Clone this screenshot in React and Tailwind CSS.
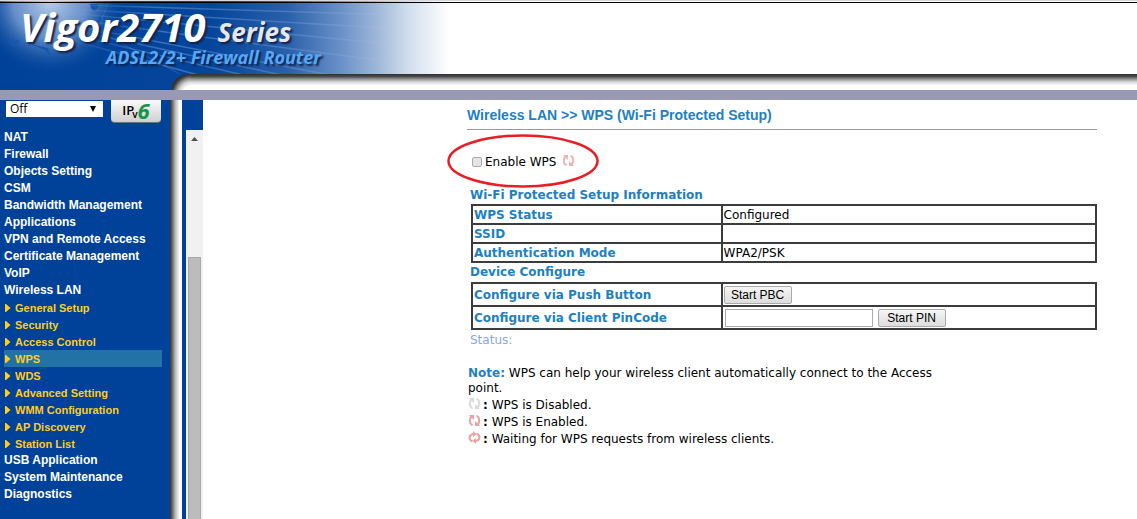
import React from "react";

const sections = ["NAT", "Firewall", "Objects Setting", "CSM", "Bandwidth Management", "Applications", "VPN and Remote Access", "Certificate Management", "VoIP", "Wireless LAN"];
const wireless = ["General Setup", "Security", "Access Control", "WPS", "WDS", "Advanced Setting", "WMM Configuration", "AP Discovery", "Station List"];
const system = ["USB Application", "System Maintenance", "Diagnostics"];

function WpsIcon({ color, waiting = false }) {
  return (
    <svg className="block h-[13px] w-[13px] shrink-0" viewBox="0 0 13 13" fill="none" stroke={color} strokeWidth="2" aria-hidden="true">
      {waiting ? (
        <>
          <path d="M4.500 10.500C.2 8.500.6 3.800 5.500 3" />
          <path d="M8.500 2.500C12.800 4.500 12.400 9.200 7.500 10" />
          <path d="M5 0 8.500 3 5 6ZM8 7 4.500 10 8 13Z" fill={color} stroke="none" />
        </>
      ) : (
        <>
          <path d="M4.500 11.500C1 9.500 1 5 3.500 2.500" />
          <path d="M8.500 1.500C12 3.500 12 8 9.500 10.500" />
          <path d="M1 1H6V6ZM12 12H7V7Z" fill={color} stroke="none" />
        </>
      )}
    </svg>
  );
}

function Banner() {
  return (
    <header className="relative h-[90px] overflow-hidden border-t border-[#d8d8de] bg-white">
      <svg className="absolute inset-0 h-full w-full" aria-hidden="true">
        <defs>
          <linearGradient id="sky" gradientUnits="userSpaceOnUse" x1="0" y1="0" x2="450" y2="0">
            <stop offset="0" stopColor="#00429a" />
            <stop offset=".47" stopColor="#05459b" />
            <stop offset=".64" stopColor="#2a60ab" />
            <stop offset=".76" stopColor="#6a92c8" />
            <stop offset=".84" stopColor="#a0b8da" />
            <stop offset=".91" stopColor="#d3dfee" />
            <stop offset="1" stopColor="#fff" />
          </linearGradient>
          <radialGradient id="globe" gradientUnits="userSpaceOnUse" cx="50" cy="0" r="75">
            <stop offset="0" stopColor="#b9cdeb" />
            <stop offset=".5" stopColor="#7fa2d5" stopOpacity=".8" />
            <stop offset="1" stopColor="#00429a" stopOpacity="0" />
          </radialGradient>
          <linearGradient id="rays" gradientUnits="userSpaceOnUse" x1="60" y1="0" x2="400" y2="0">
            <stop offset="0" stopColor="#8fb2e2" stopOpacity="0" />
            <stop offset=".3" stopColor="#8fb2e2" stopOpacity=".4" />
            <stop offset=".75" stopColor="#9dbbe4" stopOpacity=".25" />
            <stop offset="1" stopColor="#d5e0f1" stopOpacity="0" />
          </linearGradient>
          <linearGradient id="edge" x1="0" y1="0" x2="0" y2="1">
            <stop offset="0" stopColor="#303030" />
            <stop offset=".15" stopColor="#484848" />
            <stop offset=".3" stopColor="#8c8c8c" />
            <stop offset=".5" stopColor="#d8d8d8" />
            <stop offset=".7" stopColor="#fff" />
          </linearGradient>
          <radialGradient id="bend" gradientUnits="userSpaceOnUse" cx="191" cy="93" r="20">
            <stop offset=".4" stopColor="#fff" />
            <stop offset=".6" stopColor="#d8d8d8" />
            <stop offset=".78" stopColor="#8c8c8c" />
            <stop offset=".9" stopColor="#484848" />
            <stop offset="1" stopColor="#303030" />
          </radialGradient>
        </defs>
        <rect width="100%" height="90" fill="url(#sky)" />
        <rect width="150" height="90" fill="url(#globe)" />
        <path d="M90 3h9l-1 4-4 3-3-3zM100 14l4 8-7 7-2-6zM8 41l12-2-6 7zM30 43l18 4 3 8-6-6z" fill="#1558ad" />
        <path d="M108 1 98 30 180 73" stroke="#3f74bd" strokeOpacity=".5" fill="none" />
        <g stroke="url(#rays)" strokeWidth="1.500" fill="none">
          <path d="M80 4 400 14M70 8 400 28M70 12 400 44M60 17 400 62M60 22 340 76M60 26 300 78M60 31 260 78M60 36 220 80" />
        </g>
        <rect x="191" y="73" width="100%" height="16" fill="url(#edge)" />
        <path d="M171 90Q173 73 191 73V90Z" fill="url(#bend)" />
        <rect width="100%" y="1" height="1" fill="#000" />
      </svg>
      <div className="relative pl-5 pt-1.5 font-['Open_Sans',sans-serif] font-bold italic">
        <h1 className="flex h-10 items-baseline gap-3 leading-10 text-white [text-shadow:2px_2px_2px_#10234d]">
          <span className="text-[40px]">Vigor2710</span>
          <span className="text-[26px] text-gray-200">Series</span>
        </h1>
        <p className="pl-[86px] text-lg leading-5 text-[#55a8f5] [text-shadow:2px_2px_2px_#10234d]">ADSL2/2+ Firewall Router</p>
      </div>
    </header>
  );
}

function Sidebar() {
  return (
    <aside className="flex w-[203px] shrink-0">
      <div className="w-[170px] bg-[#00429a]">
        <div className="flex h-[29px] items-start gap-2 pl-1.5">
          <div className="relative mt-px h-4 w-[97px]">
            <select aria-label="Auto logout" className="block h-4 w-full appearance-none rounded-none bg-white pl-1 font-['Open_Sans',sans-serif] text-xs leading-4 text-black">
              <option>Off</option>
              <option>5 min</option>
            </select>
            <svg className="pointer-events-none absolute right-[7px] top-[5px] h-1.5 w-1.5" viewBox="0 0 6 6" aria-hidden="true"><path d="M0 0h6L3 6z" fill="#000" /></svg>
          </div>
          <button className="flex h-[23px] w-[50px] items-start justify-center rounded-b-sm border-b border-gray-500 bg-linear-to-b from-[#fafafa] to-[#d0d0d0] font-['Open_Sans',sans-serif] text-black" aria-label="IPv6">
            <span className="mt-0.5 text-[13px] font-semibold leading-4">IP</span>
            <span className="-ml-0.5 mt-1.5 text-[10px] font-semibold leading-4">v</span>
            <span className="text-[22px] font-bold italic leading-5 text-[#189548]">6</span>
          </button>
        </div>
        <nav className="font-['Liberation_Sans',sans-serif] font-bold">
          <ul className="pl-1 text-xs leading-[17px] text-white">
            {sections.map((name) => <li key={name}><a href="#">{name}</a></li>)}
          </ul>
          <ul className="ml-1 mr-2 text-[11px] text-[#ffcc1f]">
            {wireless.map((name) => (
              <li key={name} className={name === "WPS" ? "bg-[#2272a8]" : ""}>
                <a href="#" className="flex items-center gap-1 pl-px pt-px leading-4">
                  <svg className="h-2 w-1.5" viewBox="0 0 6 8" aria-hidden="true"><path d="M0 0h1L5.500 4 1 8H0z" fill="currentColor" /></svg>
                  {name}
                </a>
              </li>
            ))}
          </ul>
          <ul className="pl-1 text-xs leading-[17px] text-white">
            {system.map((name) => <li key={name}><a href="#">{name}</a></li>)}
          </ul>
        </nav>
      </div>
      <div className="w-3 bg-linear-to-r from-[#333] via-[#bbb] via-45% to-white to-80%" />
      <div className="w-1 bg-[#00429a]" />
      <div className="flex flex-1 flex-col">
        <div className="h-[30px] bg-[#00429a]" />
        <div className="flex flex-1 flex-col items-center bg-[#f1f1f1]">
          <svg className="mt-[7px] h-1 w-[7px]" viewBox="0 0 7 4" aria-hidden="true"><path d="M0 4 3.500 0 7 4z" fill="#505050" /></svg>
          <div className="mt-[116px] w-[13px] flex-1 border border-b-0 border-[#a8a8a8] bg-[#bcbcbc]" />
        </div>
      </div>
    </aside>
  );
}

const table = "ml-1 w-[calc(100%-4px)] table-fixed border-collapse border-2 border-[#3c3c3c] [&_td]:border-2 [&_td]:border-[#3c3c3c] [&_td]:pl-px [&_th]:border-2 [&_th]:border-[#3c3c3c] [&_th]:pl-px [&_th]:text-left [&_th]:text-[#1d80c3]";
const button = "h-[18px] w-[68px] rounded-xs border border-[#aaa] bg-linear-to-b from-[#f6f6f6] to-[#dddddd] font-['Liberation_Sans',sans-serif] text-xs leading-4 text-black";

export default function App() {
  return (
    <div className="flex min-h-screen flex-col bg-white font-['DejaVu_Sans',Verdana,sans-serif] text-xs text-black">
      <Banner />
      <div className="h-2.5 bg-[#9999b5]" />
      <div className="flex flex-1">
        <Sidebar />
        <main className="ml-[264px] mr-10 min-w-0 flex-1">
          <h2 className="border-b border-[#999] pb-[5px] pt-[7px] font-['Liberation_Sans',sans-serif] text-sm font-bold leading-[17px] text-[#1d80c3]">Wireless LAN &gt;&gt; WPS (Wi-Fi Protected Setup)</h2>
          <div className="relative mt-6 flex h-4 items-center pl-[5px]">
            <label className="flex items-center gap-[3px]">
              <input type="checkbox" className="h-2.5 w-2.5 appearance-none rounded-xs border border-[#aaa] bg-[#e4e4e4]" />
              Enable WPS
            </label>
            <span className="ml-1.5 self-start"><WpsIcon color="#efb3b3" /></span>
            <svg className="pointer-events-none absolute -left-5 -top-5 h-[54px] w-[152px]" viewBox="0 0 152 54" fill="none" aria-hidden="true">
              <ellipse cx="76" cy="27" rx="74.500" ry="25.500" stroke="#eb1c24" strokeWidth="2.500" />
            </svg>
          </div>
          <h3 className="mt-4 pl-[3px] font-bold leading-[18px] text-[#1d80c3]">Wi-Fi Protected Setup Information</h3>
          <table className={table}>
            <colgroup><col className="w-2/5" /><col /></colgroup>
            <tbody>
              <tr className="h-[19px]"><th>WPS Status</th><td>Configured</td></tr>
              <tr className="h-[19px]"><th>SSID</th><td /></tr>
              <tr className="h-[19px]"><th>Authentication Mode</th><td>WPA2/PSK</td></tr>
            </tbody>
          </table>
          <h3 className="pl-[3px] font-bold leading-[19px] text-[#1d80c3]">Device Configure</h3>
          <table className={table}>
            <colgroup><col className="w-2/5" /><col /></colgroup>
            <tbody>
              <tr className="h-[23px]"><th>Configure via Push Button</th><td><button className={button + " block"}>Start PBC</button></td></tr>
              <tr className="h-[23px]"><th><label htmlFor="pin">Configure via Client PinCode</label></th><td><div className="flex gap-[5px] pl-px"><input id="pin" className="h-[18px] w-[148px] border border-[#aaa] px-1" /><button className={button}>Start PIN</button></div></td></tr>
            </tbody>
          </table>
          <p className="pl-[3px] leading-5 text-[#84a7e8]">Status:</p>
          <div className="mt-4 pl-px">
            <p className="max-w-[480px] leading-[15px]"><strong className="text-[#1d80c3]">Note:</strong> WPS can help your wireless client automatically connect to the Access point.</p>
            <ul className="mt-px leading-[17px]">
              <li className="flex items-start gap-0.5"><WpsIcon color="#dadada" /><span><b>:</b> WPS is Disabled.</span></li>
              <li className="flex items-start gap-0.5"><WpsIcon color="#e6a3a3" /><span><b>:</b> WPS is Enabled.</span></li>
              <li className="flex items-start gap-0.5"><WpsIcon color="#e6a3a3" waiting /><span><b>:</b> Waiting for WPS requests from wireless clients.</span></li>
            </ul>
          </div>
        </main>
      </div>
    </div>
  );
}
